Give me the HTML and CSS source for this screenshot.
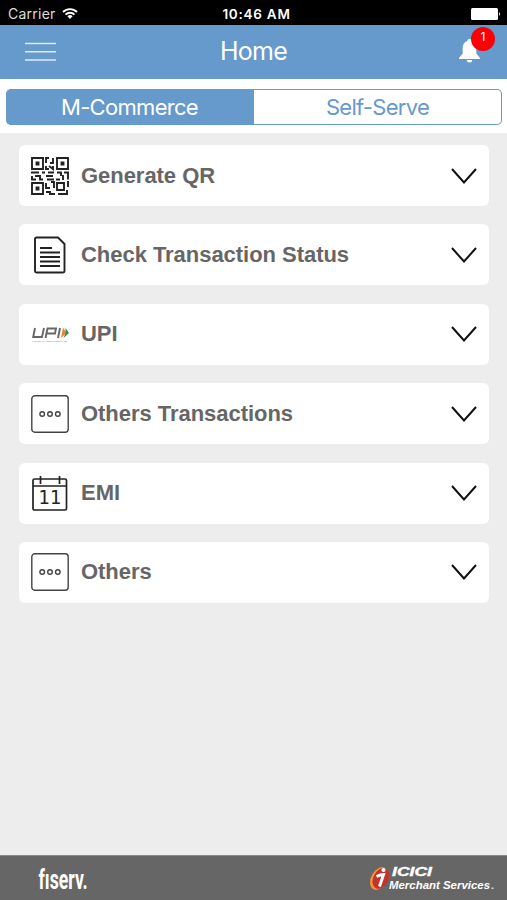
FILE: index.html
```html
<!DOCTYPE html>
<html lang="en">
<head>
    <meta charset="UTF-8">
    <meta name="viewport" content="width=device-width, initial-scale=1.0">
    <title>Home</title>
    <link rel="stylesheet" href="styles.css">
</head>
<body>
    <div class="status-bar">
        <div class="carrier">
            <span>Carrier</span>
            <svg width="16" height="13" viewBox="0 0 16 13" fill="none" stroke="#fff" stroke-width="1.9">
                <path d="M1 5a10 10 0 0 1 14 0M3.5 7.6a6.4 6.4 0 0 1 9 0"/>
                <path d="M8 12l-2.6-2.7a3.8 3.8 0 0 1 5.2 0z" fill="#fff" stroke="none"/>
            </svg>
        </div>
        <span class="time">10:46 AM</span>
        <svg class="battery" width="30" height="12" viewBox="0 0 30 12" fill="#fff">
            <rect width="27" height="12" rx="1.5"/>
            <path d="M28 4q2 2 0 4z"/>
        </svg>
    </div>

    <header>
        <svg class="menu" width="31" height="20" viewBox="0 0 31 20" stroke="#dcecff" stroke-width="1.5">
            <path d="M0 1.5h31M0 9.7h31M0 18h31"/>
        </svg>
        <h1>Home</h1>
        <div class="bell">
            <svg width="21" height="24" viewBox="0 0 20 24" preserveAspectRatio="none" fill="#fff">
                <path d="M10 0C8.800 0 8 .8 8 2C4.800 3 3.500 5.800 3.500 9v5.500L0 19v1h20v-1l-3.500-4.500V9c0-3.200-1.300-6-4.500-7C12 .8 11.200 0 10 0zM7.500 21a2.500 2.500 0 0 0 5 0z"/>
            </svg>
            <span class="badge">1</span>
        </div>
    </header>

    <div class="tabs">
        <a class="tab active">M-Commerce</a>
        <a class="tab">Self-Serve</a>
    </div>

    <main>
        <div class="card">
            <svg class="icon" viewBox="0 0 38 38" fill="none" stroke="#222" stroke-width="1.9">
                <path d="M1 1h11v11H1zM26 1h11v11H26zM1 26h11v11H1z"/>
                <path d="M5.500 5.500h2v2h-2zM30.500 5.500h2v2h-2zM5.500 30.500h2v2h-2z"/>
                <path d="M15 6V1h3M22 1v5h-3M15 9v3h3M18 9l4 3V9"/>
                <path d="M0 15.500h8M11 15.500h3M1 19v3.500h4M4 19h5v3.500h3M17 15.500h6M15 19h7M16 22.500h7M26 15.500h4v3.500M33 15.500h4v7M25 22.500h4M32 18v5"/>
                <path d="M15 26v5h4M15 35h4v2h5M20 25h3v6M26 26h7v7h-7zM37 24v6M36 33v4h-9"/>
            </svg>
            <h2>Generate QR</h2>
            <svg class="arrow" viewBox="0 0 26 16"><path d="M1 1l12 13.500L25 1"/></svg>
        </div>
        <div class="card">
            <svg class="icon" viewBox="0 0 38 38" fill="none" stroke="#222" stroke-width="1.900">
                <path d="M6.500 1.500H27l6.500 6.500v27q0 1.500-1.500 1.500H5.500Q4 36.500 4 35V3q0-1.500 1.500-1.500z"/>
                <path d="M9 12h12M9 16.500h20M9 21h20M9 25.500h20M9 30h20"/>
            </svg>
            <h2>Check Transaction Status</h2>
            <svg class="arrow" viewBox="0 0 26 16"><path d="M1 1l12 13.500L25 1"/></svg>
        </div>
        <div class="card">
            <svg class="icon" viewBox="0 0 38 38">
                <path d="M4 13L2.200 22H11L13 13M14.500 23L16.500 13.500H25L24 18.500H16M29 13L27 23" fill="none" stroke="#666" stroke-width="1.900"/>
                <path d="M32 12.500l3.500 5.500-5.500 5z" fill="#e8883a"/>
                <path d="M34.500 13l3.500 5-5.500 5 2-5z" fill="#3c8a4a"/>
                <text x="1" y="27" textLength="35" class="upi-note">UNIFIED PAYMENTS INTERFACE</text>
            </svg>
            <h2>UPI</h2>
            <svg class="arrow" viewBox="0 0 26 16"><path d="M1 1l12 13.500L25 1"/></svg>
        </div>
        <div class="card">
            <svg class="icon" viewBox="0 0 38 38" fill="none" stroke="#444" stroke-width="1.400">
                <rect x=".8" y=".8" width="36.400" height="36.400" rx="3"/>
                <circle cx="11.200" cy="19" r="2.300"/><circle cx="19" cy="19" r="2.300"/><circle cx="26.800" cy="19" r="2.300"/>
            </svg>
            <h2>Others Transactions</h2>
            <svg class="arrow" viewBox="0 0 26 16"><path d="M1 1l12 13.500L25 1"/></svg>
        </div>
        <div class="card">
            <svg class="icon" viewBox="0 0 38 38" fill="none" stroke="#222" stroke-width="1.700">
                <rect x="2" y="5" width="33.500" height="31" rx="1.500"/>
                <path d="M2 12h33.500M9.500 2v8M28.500 2v8"/>
                <text x="7.500" y="30" textLength="23" lengthAdjust="spacingAndGlyphs" class="day">11</text>
            </svg>
            <h2>EMI</h2>
            <svg class="arrow" viewBox="0 0 26 16"><path d="M1 1l12 13.500L25 1"/></svg>
        </div>
        <div class="card">
            <svg class="icon" viewBox="0 0 38 38" fill="none" stroke="#444" stroke-width="1.400">
                <rect x=".8" y=".8" width="36.400" height="36.400" rx="3"/>
                <circle cx="11.200" cy="19" r="2.300"/><circle cx="19" cy="19" r="2.300"/><circle cx="26.800" cy="19" r="2.300"/>
            </svg>
            <h2>Others</h2>
            <svg class="arrow" viewBox="0 0 26 16"><path d="M1 1l12 13.500L25 1"/></svg>
        </div>
    </main>

    <footer>
        <svg width="52" height="34" viewBox="0 0 52 34">
            <text class="fiserv" transform="translate(0.500 28) scale(.6 1)" textLength="82" lengthAdjust="spacingAndGlyphs">fıserv.</text>
        </svg>
        <svg width="126" height="34" viewBox="0 0 126 34">
            <g transform="rotate(28 10 17)">
                <ellipse cx="9.500" cy="18" rx="8" ry="12" fill="#f5923e"/>
                <ellipse cx="11" cy="17" rx="7.500" ry="11" fill="#c2332a"/>
            </g>
            <circle cx="13.500" cy="9" r="2.100" fill="#fff"/>
            <path d="M6.500 15.500q4-2 7-2l-4 12" fill="none" stroke="#fff" stroke-width="3"/>
            <text class="icici" x="22" y="15" font-size="13" stroke="#fff" stroke-width=".4" textLength="40" lengthAdjust="spacingAndGlyphs">ICICI</text>
            <text class="icici" x="19" y="28" font-size="10.500" textLength="101" lengthAdjust="spacingAndGlyphs">Merchant Services</text>
            <rect x="121.500" y="26.500" width="2" height="1.500" fill="#ddd"/>
        </svg>
    </footer>
</body>
</html>
```
FILE: styles.css
```css
* {
    box-sizing: border-box;
}

body {
    font-family: Inter, "Liberation Sans", sans-serif;
    margin: 0;
    height: 900px;
    display: flex;
    flex-direction: column;
    background-color: #ededed;
}

.status-bar {
    display: grid;
    grid-template-columns: 1fr auto 1fr;
    align-items: center;
    height: 25px;
    padding: 2px 6px 0 8px;
    background-color: #000;
    color: #fff;
    font-size: 14px;
}

.carrier {
    display: flex;
    align-items: center;
    gap: 6px;
    color: #ddd;
    letter-spacing: 0.25px;
}

.time {
    margin-left: 4px;
    font-weight: 600;
    font-size: 13.5px;
    letter-spacing: 0.75px;
}

.battery {
    justify-self: end;
}

header {
    display: flex;
    align-items: center;
    justify-content: space-between;
    height: 54px;
    padding: 0 27px 2px 25px;
    background-color: #6699cc;
    color: #fff;
}

.menu {
    margin-top: 1px;
}

h1 {
    margin: 0 0 0 -8px;
    font-size: 25px;
    font-weight: 400;
    letter-spacing: -0.7px;
}

.bell {
    position: relative;
    width: 21px;
    height: 24px;
}

.badge {
    position: absolute;
    top: -12px;
    left: 12px;
    width: 24px;
    height: 24px;
    border-radius: 50%;
    background-color: #fb0007;
    font-size: 12px;
    line-height: 20px;
    text-align: center;
}

.tabs {
    display: flex;
    height: 54px;
    padding: 10px 5px 8px 6px;
    background-color: #fff;
}

.tab {
    flex: 1;
    border: 1px solid #6699cc;
    border-left: 0;
    border-radius: 0 5px 5px 0;
    color: #6699cc;
    font-size: 22px;
    line-height: 34px;
    letter-spacing: -0.7px;
    text-align: center;
}

.tab.active {
    border-radius: 5px 0 0 5px;
    background-color: #6699cc;
    color: #fff;
}

main {
    flex: 1;
    display: flex;
    flex-direction: column;
    gap: 18.4px;
    padding: 12px 18px 0 19px;
}

.card {
    display: flex;
    align-items: center;
    height: 61px;
    padding: 0 12px;
    border-radius: 6px;
    background-color: #fff;
}

.icon {
    width: 38px;
    height: 38px;
}

.card h2 {
    flex: 1;
    margin: 0 0 0 12px;
    color: #666;
    font-family: "Liberation Sans", sans-serif;
    font-size: 22px;
    line-height: 26px;
    letter-spacing: -0.04px;
}

.arrow {
    width: 26px;
    height: 16px;
    fill: none;
    stroke: #111;
    stroke-width: 2;
}

.day {
    fill: #222;
    stroke: none;
    font-family: "DejaVu Sans", sans-serif;
    font-size: 19px;
}

.upi-note {
    fill: #999;
    font-family: "Liberation Sans", sans-serif;
    font-size: 2.5px;
}

footer {
    display: flex;
    align-items: center;
    justify-content: space-between;
    height: 45px;
    padding: 0 11px 0 38px;
    border-top: 1px solid #888;
    background-color: #666;
}

.fiserv {
    fill: #fff;
    font-family: Roboto, sans-serif;
    font-size: 27px;
    font-weight: 700;
}

.icici {
    fill: #fff;
    font-family: "Liberation Sans", sans-serif;
    font-style: italic;
    font-weight: 700;
}
```
